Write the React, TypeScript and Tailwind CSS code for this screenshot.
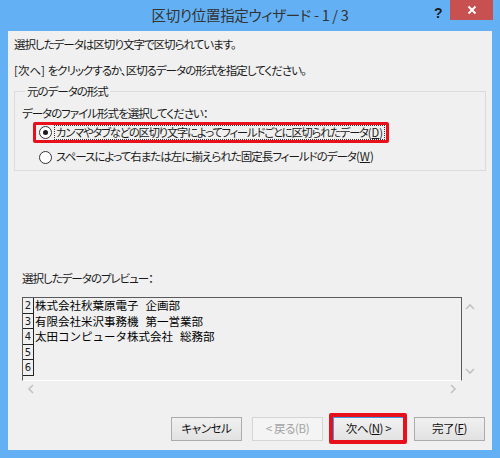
import React from "react"

const jp = "font-['Noto_Sans_CJK_JP','Noto_Sans',sans-serif]"

function Chevron({ dir }: { dir: "up" | "down" | "left" | "right" }) {
  const d = {
    up: "M1 6 L5 2 L9 6",
    down: "M1 2 L5 6 L9 2",
    left: "M6 1 L2 5 L6 9",
    right: "M2 1 L6 5 L2 9",
  }[dir]
  const vertical = dir === "up" || dir === "down"
  return (
    <svg width={vertical ? 10 : 8} height={vertical ? 8 : 10} viewBox={vertical ? "0 0 10 8" : "0 0 8 10"}>
      <path d={d} fill="none" stroke="#c2c2c2" strokeWidth="1.6" />
    </svg>
  )
}

function Radio({ checked }: { checked?: boolean }) {
  return (
    <span className="w-[13px] h-[13px] rounded-full border border-[#333] bg-white flex items-center justify-center shrink-0">
      {checked && <span className="w-[5px] h-[5px] rounded-full bg-[#1a1a1a]" />}
    </span>
  )
}

function Button({ children, disabled, primary }: { children: React.ReactNode; disabled?: boolean; primary?: boolean }) {
  return (
    <div
      className={
        "w-[71px] h-[24px] flex items-center justify-center text-[11.5px] tracking-[-0.4px] leading-none border whitespace-nowrap " +
        (disabled
          ? "border-[#d5d5d5] bg-[#f4f4f4] text-[#a3a3a3]"
          : primary
            ? "border-[#3c9be8] bg-gradient-to-b from-[#f1f1f1] to-[#e3e3e3] text-[#111]"
            : "border-[#acacac] bg-gradient-to-b from-[#f0f0f0] to-[#e2e2e2] text-[#111]")
      }
    >
      {children}
    </div>
  )
}

const rows = [
  { n: "2", a: "株式会社秋葉原電子", b: "企画部" },
  { n: "3", a: "有限会社米沢事務機", b: "第一営業部" },
  { n: "4", a: "太田コンピュータ株式会社", b: "総務部" },
  { n: "5", a: "", b: "" },
  { n: "6", a: "", b: "" },
]

export default function App() {
  return (
    <div className={`w-[500px] h-[458px] bg-[#63b1f4] flex flex-col ${jp} [font-feature-settings:'palt']`}>
      {/* Title bar */}
      <div className="relative h-[31px] shrink-0 flex items-center justify-center">
        <span className="text-[14.5px] tracking-[-0.3px] text-[#333] pb-[1px] whitespace-nowrap">区切り位置指定ウィザード - 1 / 3</span>
        <span className="absolute left-[434px] top-[3px] text-[14px] font-bold text-[#1a1a1a] font-['Liberation_Sans',sans-serif]">?</span>
        <div className="absolute left-[450px] top-0 w-[43px] h-[20px] bg-[#c75050] flex items-center justify-center">
          <svg width="10" height="10" viewBox="0 0 10 10">
            <path d="M1.5 1.5 L8.5 8.5 M8.5 1.5 L1.5 8.5" stroke="white" strokeWidth="2" />
          </svg>
        </div>
      </div>

      {/* Client area */}
      <div className="mx-[8px] h-[419px] bg-[#f0f0f0] flex flex-col text-[11.5px] tracking-[-1px] text-[#1a1a1a] whitespace-nowrap">
        <p className="mt-[5px] ml-[6px] leading-[16px]">選択したデータは区切り文字で区切られています。</p>
        <p className="mt-[10px] ml-[6px] leading-[16px]">
          <span className="tracking-normal">[次へ] </span>をクリックするか、区切るデータの形式を指定してください。
        </p>

        <fieldset className="mt-[5px] ml-[6px] w-[472px] border border-[#dcdcdc] pl-[7px] pb-[5px]">
          <legend className="ml-[3px] px-[2px] leading-[16px]">元のデータの形式</legend>
          <p className="mt-[6px] leading-[16px]">データのファイル形式を選択してください：</p>
          <div className="mt-[1px] ml-[11px] w-fit h-[21px] border-[3px] border-[#e8101a] rounded-[2px] flex items-center pl-[3px] pr-[1px]">
            <Radio checked />
            <span className="ml-[2px] h-[15px] border border-dotted border-[#333] flex items-center pl-[1px] pr-[1px] leading-none text-[11.2px] tracking-[-1.1px]">
              カンマやタブなどの区切り文字によってフィールドごとに区切られたデータ
              <span className="tracking-normal">
                (<span className="underline">D</span>)
              </span>
            </span>
          </div>
          <div className="mt-[6px] ml-[17px] h-[16px] flex items-center">
            <Radio />
            <span className="ml-[4px] leading-none">
              スペースによって右または左に揃えられた固定長フィールドのデータ
              <span className="tracking-normal">
                (<span className="underline">W</span>)
              </span>
            </span>
          </div>
        </fieldset>

        <p className="mt-[99px] ml-[14px] leading-[16px]">選択したデータのプレビュー：</p>

        {/* Preview */}
        <div className="mt-[11px] ml-[14px] w-[456px] grid grid-cols-[440px_16px] grid-rows-[84px_16px]">
          <div className="border-t border-l border-r border-[#5a5a5a] border-b border-b-white overflow-hidden [font-feature-settings:normal] tracking-normal">
            {rows.map((r) => (
              <div key={r.n} className="h-[15.6px] flex">
                <div className="w-[11px] shrink-0 border-r border-b border-[#222] text-[10px] leading-[15px] text-center font-['DejaVu_Sans',sans-serif]">
                  {r.n}
                </div>
                <div className="pl-[1px] text-[11.5px] leading-[15.6px] text-black flex gap-[7px]">
                  <span>{r.a}</span>
                  <span>{r.b}</span>
                </div>
              </div>
            ))}
          </div>
          <div className="flex flex-col items-center justify-between py-[6px]">
            <Chevron dir="up" />
            <Chevron dir="down" />
          </div>
          <div className="flex items-center justify-between px-[5px]">
            <Chevron dir="left" />
            <Chevron dir="right" />
          </div>
          <div />
        </div>

        {/* Buttons */}
        <div className="mt-[20px] flex justify-end gap-[10px] pr-[7px]">
          <Button>キャンセル</Button>
          <Button disabled>&lt; 戻る(B)</Button>
          <div className="relative">
            <Button primary>
              次へ(<span className="underline">N</span>) &gt;
            </Button>
            <div className="absolute -left-[4px] -top-[4px] -right-[3px] -bottom-[3px] border-[4px] border-[#e8101a] rounded-[2px]" />
          </div>
          <Button>
            完了(<span className="underline">F</span>)
          </Button>
        </div>
      </div>
    </div>
  )
}
